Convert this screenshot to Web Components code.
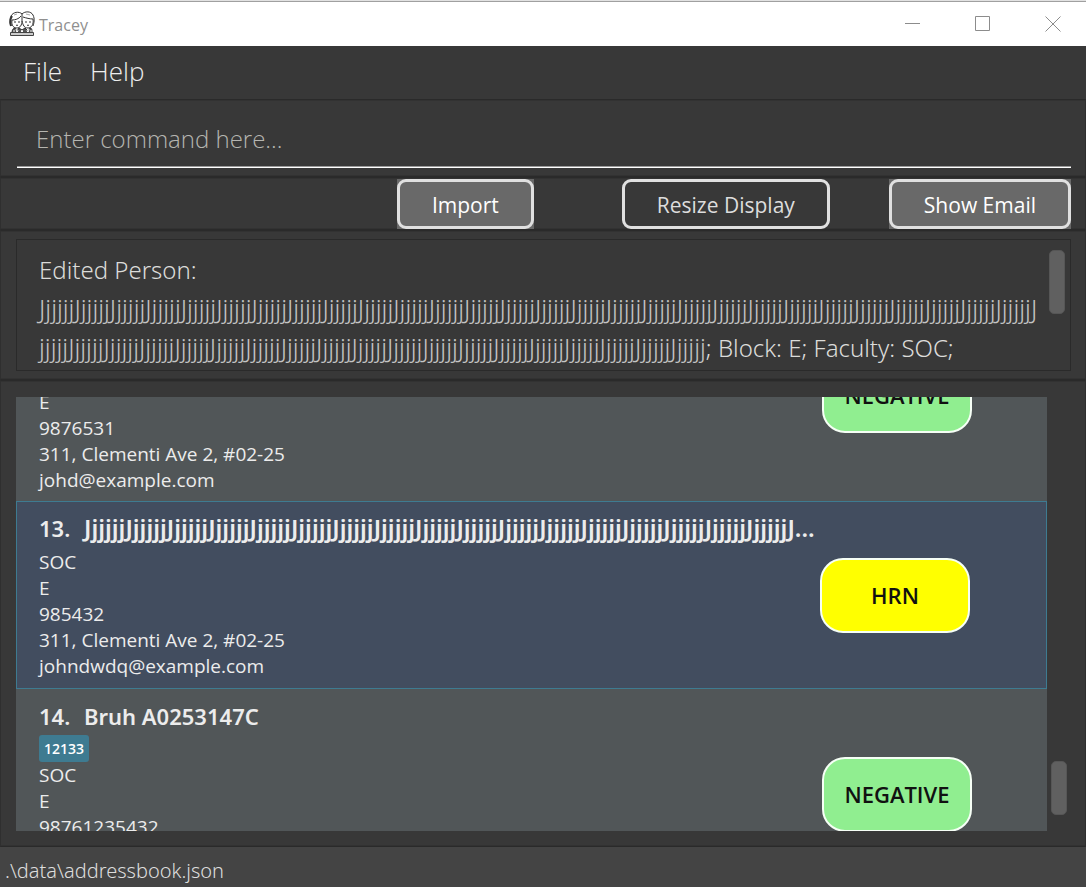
<!DOCTYPE html>
<html lang="en">
<head>
<meta charset="utf-8">
<meta name="viewport" content="width=device-width, initial-scale=1">
<title>Tracey</title>
<style>
  html, body { height: 100%; margin: 0; background: #383838; }
  body { font-family: "Open Sans", "Noto Sans", sans-serif; overflow: hidden; }
</style>
</head>
<body>
<tracey-app>
  <title-bar slot="title">Tracey</title-bar>
  <menu-bar slot="menu"></menu-bar>
  <command-box></command-box>
  <action-bar></action-bar>
  <result-display></result-display>
  <person-list>
    <person-card class="tail" status="NEGATIVE" color="lightgreen">
      <li>E</li><li>9876531</li><li>311, Clementi Ave 2, #02-25</li><li>johd@example.com</li>
    </person-card>
    <person-card class="selected" index="13." name="JjjjjjJjjjjjJjjjjjJjjjjjJjjjjjJjjjjjJjjjjjJjjjjjJjjjjjJjjjjjJjjjjjJjjjjjJjjjjjJjjjjjJjjjjjJjjjjjJjjjjjJ..." status="HRN" color="yellow">
      <li>SOC</li><li>E</li><li>985432</li><li>311, Clementi Ave 2, #02-25</li><li>johndwdq@example.com</li>
    </person-card>
    <person-card class="tagged" index="14." name="Bruh A0253147C" tag="12133" status="NEGATIVE" color="lightgreen">
      <li>SOC</li><li>E</li><li>98761235432</li>
    </person-card>
  </person-list>
  <status-bar slot="status">.\data\addressbook.json</status-bar>
</tracey-app>

<script>
const define = (name, html, setup) => customElements.define(name, class extends HTMLElement {
  connectedCallback() {
    if (this.shadowRoot) return;
    const root = this.attachShadow({ mode: 'open' });
    const t = document.createElement('template');
    t.innerHTML = html;
    root.append(t.content.cloneNode(true));
    if (setup) setup(this, root);
  }
});

/* Shared frame of the stacked panes */
const pane = `*, *::before { box-sizing: border-box; }
  :host { display: block; box-sizing: border-box; background: #383838; border: 1px solid #2f2f2f;
          border-top-color: #2a2a2a; border-bottom-color: #2a2a2a;
          box-shadow: inset 0 1px #323232, inset 0 -1px #323232; }`;
const thumb = `.thumb { flex: none; width: 16px; border-radius: 5px; background: #606060; border: 1px solid #565656; }`;

define('tracey-app', `
  <style>
    :host { display: flex; flex-direction: column; height: 100vh; }
    main { flex: 1; min-height: 0; display: flex; flex-direction: column; }
    ::slotted(person-list) { flex: 1; min-height: 0; }
  </style>
  <slot name="title"></slot><slot name="menu"></slot>
  <main><slot></slot></main>
  <slot name="status"></slot>`);

define('title-bar', `
  <style>
    :host { display: flex; align-items: center; height: 46px; box-sizing: border-box; background: #fff;
            border-top: 1px solid #e2e2e2; box-shadow: inset 0 1px #a0a0a0; color: #8f8f8f; font-size: 16px; }
    .logo { width: 26px; height: 26px; margin: 0 4px 0 9px; }
    .name { flex: 1; padding-top: 3px; }
    button { width: 70px; height: 44px; padding: 0 0 0 3px; border: 0; background: none; display: grid; place-items: center; }
    button svg { width: 16px; height: 16px; fill: none; stroke: #8c8c8c; }
  </style>
  <svg class="logo" viewBox="0 0 26 26" fill="none" stroke="#333" stroke-width="1" aria-hidden="true">
    <path d="M2 15C0 11 1 7 2 5C4 1 10 0 13 3C16 0 22 0 24 4C26 8 25 12 24 15"/>
    <path d="M2 15C1 11 1 8 3 5" stroke-width="2"/>
    <path d="M3 9C6 9 10 8 12 5M14 6C17 7 21 8 24 8M3 9C2 15 5 17 8 17C11 17 13 14 13 10C14 14 15 17 19 17C22 17 25 14 24 8M13 3L13 10"/>
    <path d="M5 4L8 3M17 3L21 4" stroke="#aaa"/>
    <path d="M5 11H7M9 11H11M16 11H18M20 11H22M7 14Q8 15 9 14M18 14Q19 15 20 14"/>
    <path d="M3 22C3 19 4 17 6 17L8 20L10 17L13 19L16 17L19 20L21 17C23 17 23 19 23 22" fill="#555"/>
    <path d="M5 19V22M7 18L8 22L9 19M12 22L13 19L14 22M18 19L19 22L20 18M22 19V22" stroke="#fff"/>
    <path d="M1.500 21.500H24.500V24.500H1.500Z" fill="#ccc" stroke="#444"/>
  </svg>
  <span class="name"><slot></slot></span>
  <button aria-label="Minimize"><svg viewBox="0 0 16 16"><path d="M0 7.500H15"/></svg></button>
  <button aria-label="Maximize"><svg viewBox="0 0 16 16"><path d="M.5.5H14.500V14.500H.5Z"/></svg></button>
  <button aria-label="Close"><svg viewBox="0 0 16 16"><path d="M.5.5L15.500 15.500M15.500.5L.5 15.500"/></svg></button>`);

define('menu-bar', `
  <style>
    :host { display: block; background: #383838; }
    nav { display: flex; gap: 28px; height: 53px; padding: 0 23px; }
    button { font: 300 26px/50px "Open Sans", sans-serif; height: 50px; color: #eee; background: none; border: 0; padding: 0; }
  </style>
  <nav><button>File</button><button>Help</button></nav>`);

define('command-box', `
  <style>
    ${pane}
    :host { height: 78px; padding: 9px 14px 8px 16px; }
    input { display: block; width: 100%; height: 59px; padding: 0 19px; border: 0; border-bottom: 1px solid #fff;
            box-shadow: inset 0 -1px #999; border-radius: 0; background: none; outline: 0; color: #fff;
            font: 300 24px "Open Sans", sans-serif; }
    input::placeholder { color: #b5b5b0; opacity: 1; }
  </style>
  <input type="text" aria-label="Command" placeholder="Enter command here...">`);

define('action-bar', `
  <style>
    ${pane}
    :host { height: 53px; display: flex; justify-content: flex-end; align-items: center; padding: 0 14px; }
    button { padding: 0; border: 0; background: #696969; color: #fff; font: 400 21px "Open Sans", sans-serif; }
    button span { display: block; height: 50px; padding: 0 32px; line-height: 47px; border: 3px solid #e0e0e0; border-radius: 9px; }
    .resize { background: none; color: #ddd; margin: 0 59px 0 88px; }
  </style>
  <button><span>Import</span></button>
  <button class="resize"><span>Resize Display</span></button>
  <button><span>Show Email</span></button>`);

define('result-display', `
  <style>
    ${pane} ${thumb}
    :host { height: 150px; padding: 8px 14px 8px 15px; }
    .box { display: flex; height: 132px; padding: 10px 5px 0 22px; border: 1px solid #2a2a2a; overflow: hidden; }
    output { flex: 1; font: 300 24px/39px "Noto Sans", "Open Sans", sans-serif; color: #dcdcda; white-space: nowrap; }
    .name { font-size: 25px; color: #c4c4c4; line-height: 1; }
    .thumb { height: 64px; }
  </style>
  <div class="box">
    <output>Edited Person:<br><span class="name"></span><br><span class="name"></span>; Block: E; Faculty: SOC;</output>
    <div class="thumb"></div>
  </div>`, (el, root) => {
    const [first, second] = root.querySelectorAll('.name');
    const full = 'Jjjjjj'.repeat(47), cut = 6 * 28 + 1;
    first.textContent = full.slice(0, cut);
    second.textContent = full.slice(cut);
  });

define('person-card', `
  <style>
    * { box-sizing: border-box; }
    :host { display: flex; align-items: center; box-sizing: border-box; flex: none; padding: 9px 74px 9px 22px;
            border: 1px solid transparent; color: #ececec; }
    :host(.selected) { background: #424d5f; border-color: #3e7b91; padding-right: 76px; }
    :host(.tail), :host(.tagged) { height: 213px; }
    :host(.tail) { padding-bottom: 7px; }
    :host(.tagged) { padding-bottom: 11px; }
    .info { flex: 1; min-width: 0; align-self: flex-start; }
    :host(.tail) .info { align-self: flex-end; }
    h2 { display: flex; margin: 0; height: 36px; font: 600 22px/34px "Noto Sans", "Open Sans", sans-serif; white-space: nowrap; }
    h2 .index { flex: none; width: 45px; }
    :host(.selected) .name { font-size: 24px; }
    .tags { display: flex; min-height: 2px; }
    .tag { height: 27px; padding: 0 5px; border-radius: 3px; background: #3e7b91; color: #fff; font: 600 14px/27px "Open Sans", sans-serif; }
    ul { margin: 0; padding: 0; list-style: none; }
    ::slotted(li) { display: block; font: 400 19px/26px "Open Sans", sans-serif; }
    .badge { flex: none; width: 150px; height: 75px; border: 2px solid #f6fff6; border-radius: 23px; color: #111;
             font: 600 22px/71px "Open Sans", sans-serif; text-align: center; }
  </style>
  <div class="info">
    <h2><span class="index"></span><span class="name"></span></h2>
    <div class="tags"></div>
    <ul><slot></slot></ul>
  </div>
  <div class="badge"></div>`, (el, root) => {
    const get = n => el.getAttribute(n);
    const $ = s => root.querySelector(s);
    if (get('name')) { $('.index').textContent = get('index'); $('.name').textContent = get('name'); }
    else $('h2').remove();
    if (get('tag')) {
      const tag = document.createElement('span');
      tag.className = 'tag';
      tag.textContent = get('tag');
      $('.tags').append(tag);
    }
    $('.badge').textContent = get('status');
    $('.badge').style.background = get('color') === 'yellow' ? '#ffff00' : '#90ee90';
  });

define('person-list', `
  <style>
    ${pane} ${thumb}
    :host { display: flex; gap: 4px; padding: 16px 18px 15px 15px; }
    .cards { flex: 1; min-width: 0; display: flex; flex-direction: column; background: #515658; overflow-y: auto; scrollbar-width: none; }
    .track { display: flex; flex-direction: column; justify-content: flex-end; padding-bottom: 16px; }
    .thumb { height: 54px; }
  </style>
  <div class="cards"><slot></slot></div>
  <div class="track"><div class="thumb"></div></div>`, (el, root) => {
    root.querySelector('.cards').scrollTop = 109;
  });

define('status-bar', `
  <style>
    :host { display: block; height: 40px; box-sizing: border-box; padding: 0 5px; background: #444;
            font: 300 20px/47px "Noto Sans", "Open Sans", sans-serif; color: #ddd; }
  </style>
  <slot></slot>`);
</script>
</body>
</html>
